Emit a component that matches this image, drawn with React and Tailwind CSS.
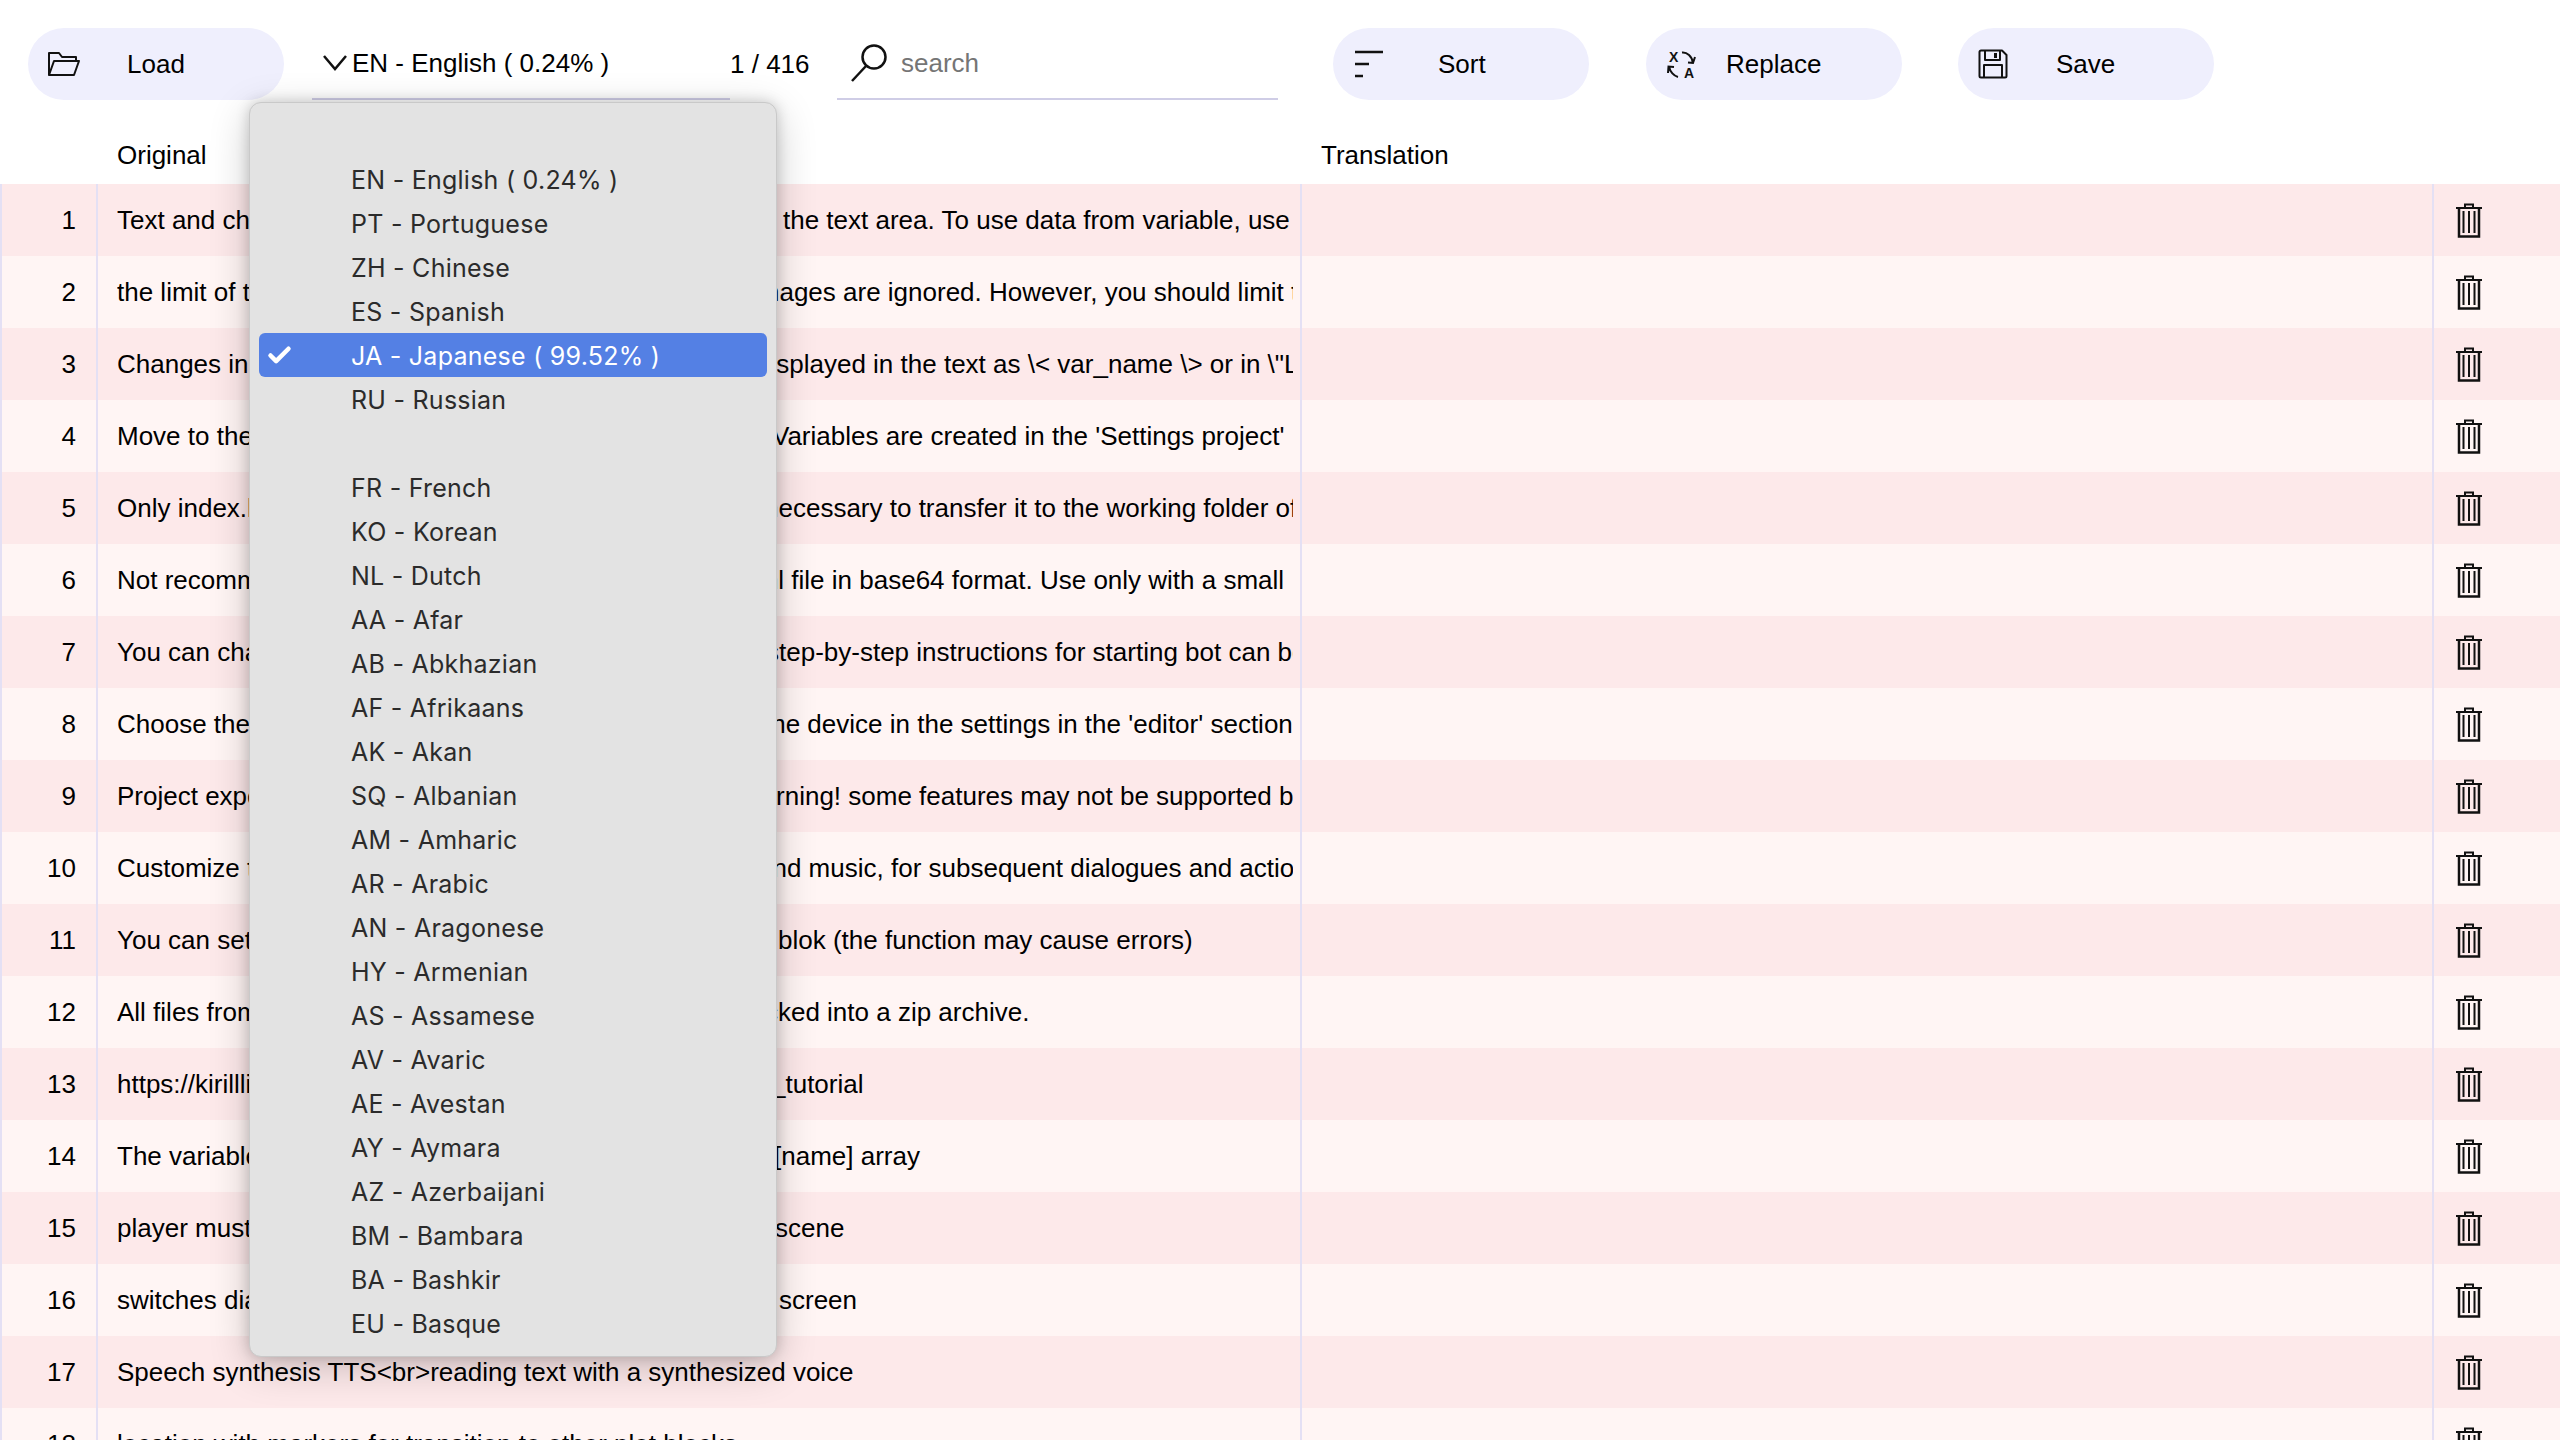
import React from 'react';
import { Check } from 'lucide-react';

const FolderIcon = () => (
    <svg width="34" height="26" viewBox="0 0 34 26" fill="none" stroke="#111" strokeWidth="2" strokeLinejoin="round">
        <path d="M2 24V2h10l3 4h14v4" />
        <path d="M2 24h25l5-14H7z" />
    </svg>
);

const SortIcon = () => (
    <svg width="30" height="28" viewBox="0 0 30 28" fill="none" stroke="#111" strokeWidth="2.5">
        <path d="M1 2h28M1 14h14M1 26h8" />
    </svg>
);

const ReplaceIcon = () => (
    <svg width="30" height="27" viewBox="0 0 30 27" fill="none" stroke="#111" strokeWidth="2">
        <text x="2" y="10.500" fontSize="14" fontWeight="700" fontFamily="'Liberation Sans', sans-serif" fill="#111" stroke="none">X</text>
        <text x="17" y="26.500" fontSize="14" fontWeight="700" fontFamily="'Liberation Sans', sans-serif" fill="#111" stroke="none">A</text>
        <path d="M15 1.500C20 1 25 5 26 12M21 11.500l5 .5 2-6" />
        <path d="M11 26C7 25 3 21 2 15.500M7 16l-5.500-.5L1 22" />
    </svg>
);

const SaveIcon = () => (
    <svg width="30" height="30" viewBox="0 0 30 30" fill="none" stroke="#111" strokeWidth="2" strokeLinejoin="round">
        <path d="M1.5 3a1.5 1.5 0 0 1 1.5-1.5h21l4.500 4.500V27a1.500 1.500 0 0 1-1.500 1.500H3A1.500 1.500 0 0 1 1.500 27z" />
        <path d="M7 2v9h15V2" />
        <path d="M6 28.500V16h18v12.500" />
        <rect x="16" y="4" width="3" height="5" fill="#111" stroke="none" />
    </svg>
);

const SearchIcon = () => (
    <svg width="38" height="38" viewBox="0 0 38 38" fill="none" stroke="#111" strokeWidth="2.500">
        <circle cx="24" cy="13" r="11.500" />
        <path d="M16 22L2 37" />
    </svg>
);

const TrashIcon = () => (
    <svg width="26" height="35" viewBox="0 0 26 35" fill="none" stroke="#111">
        <path d="M0 5h26M9 5V1.500h8V5" strokeWidth="2" />
        <path d="M3 5v28.500h20V5" strokeWidth="2.500" />
        <path d="M7.500 8v22M13 8v22M18.500 8v22" strokeWidth="2" />
    </svg>
);

const PillButton = ({ icon, label, className, labelClass }) => (
    <button className={`flex items-center h-[72px] w-[256px] rounded-[36px] bg-[#efeffd] text-[26px] text-black shrink-0 ${className}`}>
        {icon}
        <span className={labelClass}>{label}</span>
    </button>
);

// lead sits left of the open dropdown, tail comes out on its right side
const rows = [
    { lead: 'Text and characters can be entered', w: 'w-[666px]', tail: 'the text area. To use data from variable, use it' },
    { lead: 'the limit of the message length', w: 'w-[635px]', tail: 'images are ignored. However, you should limit the' },
    { lead: 'Changes in variables will be', w: 'w-[639px]', tail: 'displayed in the text as \\< var_name \\> or in \\"Lorem' },
    { lead: 'Move to the next block.', w: 'w-[655px]', tail: "Variables are created in the 'Settings project'" },
    { lead: 'Only index.html is used.', w: 'w-[647px]', tail: 'necessary to transfer it to the working folder of' },
    { lead: 'Not recommended for large', w: 'w-[618px]', tail: 'html file in base64 format. Use only with a small' },
    { lead: 'You can change the bot token', w: 'w-[649px]', tail: 'step-by-step instructions for starting bot can be' },
    { lead: 'Choose the language of', w: 'w-[647px]', tail: "the device in the settings in the 'editor' section" },
    { lead: 'Project export to the format.', w: 'w-[621px]', tail: 'Warning! some features may not be supported by' },
    { lead: 'Customize the characters', w: 'w-[641px]', tail: 'and music, for subsequent dialogues and actions' },
    { lead: 'You can set the next', w: 'w-[661px]', tail: 'blok (the function may cause errors)' },
    { lead: 'All files from the project', w: 'w-[619px]', tail: 'packed into a zip archive.' },
    { lead: 'https://kirilllive.github.io/ink', w: 'w-[654px]', tail: '_tutorial' },
    { lead: 'The variable is stored', w: 'w-[657px]', tail: '[name] array' },
    { lead: 'player must select the', w: 'w-[658px]', tail: 'scene' },
    { lead: 'switches dialogue between', w: 'w-[662px]', tail: 'screen' },
    { lead: 'Speech synthesis TTS<br>reading text with a synthesized voice', w: '', tail: '' },
    { lead: 'location with markers for transition to other plot blocks', w: '', tail: '' },
];

const mainLanguages = ['EN - English ( 0.24% )', 'PT - Portuguese', 'ZH - Chinese', 'ES - Spanish', 'JA - Japanese ( 99.52% )', 'RU - Russian'];
const otherLanguages = ['FR - French', 'KO - Korean', 'NL - Dutch', 'AA - Afar', 'AB - Abkhazian', 'AF - Afrikaans', 'AK - Akan', 'SQ - Albanian', 'AM - Amharic', 'AR - Arabic', 'AN - Aragonese', 'HY - Armenian', 'AS - Assamese', 'AV - Avaric', 'AE - Avestan', 'AY - Aymara', 'AZ - Azerbaijani', 'BM - Bambara', 'BA - Bashkir', 'EU - Basque'];

const LanguageItem = ({ label }) => {
    const selected = label.startsWith('JA');
    return (
        <div className={`flex items-center h-[44px] rounded-[6px] ${selected ? 'bg-[#5480e4] text-white' : 'text-[#2b2b2b]'}`}>
            <span className="w-[92px] shrink-0 pl-[7px]">
                {selected && <Check size={27} strokeWidth={4} />}
            </span>
            <span className="pt-[3px]">{label}</span>
        </div>
    );
};

const App = () => {
    return (
        <div className="relative h-screen overflow-hidden bg-white text-black font-['Liberation_Sans',Arial,sans-serif] text-[26px]">
            {/* Toolbar */}
            <div className="flex items-start pt-[28px] pl-[28px] h-[100px]">
                <PillButton icon={<FolderIcon />} label="Load" className="pl-[19px]" labelClass="ml-[46px]" />
                <div className="flex items-center ml-[28px] w-[418px] h-[72px] border-b-2 border-[#cfcde6]">
                    <svg className="ml-[11px]" width="24" height="16" viewBox="0 0 24 16" fill="none" stroke="#111" strokeWidth="2.500">
                        <path d="M1 1l11 13L23 1" />
                    </svg>
                    <span className="ml-[5px]">EN - English ( 0.24% )</span>
                </div>
                <div className="flex items-center h-[72px] w-[107px]">1 / 416</div>
                <div className="flex items-center w-[441px] h-[72px] border-b-2 border-[#cfcde6]">
                    <span className="ml-[13px]"><SearchIcon /></span>
                    <span className="ml-[13px] text-[#757575]">search</span>
                </div>
                <PillButton icon={<SortIcon />} label="Sort" className="ml-[55px] pl-[21px]" labelClass="ml-[54px]" />
                <PillButton icon={<ReplaceIcon />} label="Replace" className="ml-[57px] pl-[21px]" labelClass="ml-[29px]" />
                <PillButton icon={<SaveIcon />} label="Save" className="ml-[56px] pl-[20px]" labelClass="ml-[48px]" />
            </div>

            {/* Column titles */}
            <div className="flex items-center h-[84px] pt-[27px]">
                <span className="ml-[117px] w-[1204px]">Original</span>
                <span>Translation</span>
            </div>

            {/* Rows */}
            {rows.map((row, idx) => (
                <div key={idx} className={`flex h-[72px] items-center border-l-2 border-[#e4e0f4] ${idx % 2 === 0 ? 'bg-[#fde9ea]' : 'bg-[#fff5f4]'}`}>
                    <div className="w-[96px] h-full shrink-0 flex items-center justify-end pr-[20px] border-r-2 border-[#e4e0f4]">{idx + 1}</div>
                    <div className="w-[1204px] h-full shrink-0 flex items-center pl-[19px] border-r-2 border-[#e4e0f4]">
                        <div className="flex w-[1176px] overflow-hidden whitespace-nowrap">
                            <span className={row.tail ? `shrink-0 overflow-hidden ${row.w}` : ''}>{row.lead}</span>
                            {row.tail && <span>{row.tail}</span>}
                        </div>
                    </div>
                    <div className="flex-1 h-full border-r-2 border-[#e4e0f4]" />
                    <div className="w-[126px] h-full shrink-0 flex items-center pl-[22px]">
                        <TrashIcon />
                    </div>
                </div>
            ))}

            {/* Open language menu */}
            <div className="absolute left-[249px] top-[102px] w-[528px] h-[1255px] px-[9px] pt-[54px] rounded-[12px] bg-[#e3e3e3] border border-[#c9c9c9] shadow-[0_0_14px_rgba(0,0,0,0.18),0_10px_40px_rgba(0,0,0,0.2)] font-['Inter',sans-serif] text-[25px] tracking-[0.25px]">
                {mainLanguages.map(label => <LanguageItem key={label} label={label} />)}
                <div className="h-[44px]" />
                {otherLanguages.map(label => <LanguageItem key={label} label={label} />)}
            </div>
        </div>
    );
};

export default App;
